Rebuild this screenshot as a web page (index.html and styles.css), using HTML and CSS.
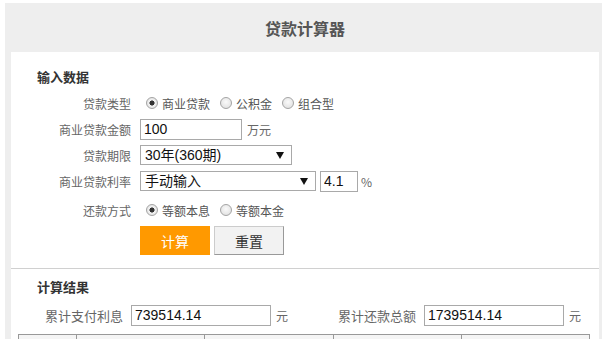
FILE: index.html
```html
<!doctype html>
<html lang="zh-CN">
<head>
    <meta charset="utf-8">
    <meta name="viewport" content="width=device-width, initial-scale=1">
    <title>贷款计算器</title>
    <link rel="stylesheet" href="styles.css">
</head>
<body>

<div class="calc">
    <!-- Заголовок -->
    <div class="calc-header">贷款计算器</div>

    <div class="calc-card">
        <!-- Ввод данных -->
        <div class="calc-section">
            <h2 class="section-title">输入数据</h2>

            <div class="form-row">
                <span class="form-label">贷款类型</span>
                <div class="form-controls">
                    <label class="radio"><input type="radio" class="radio-input" name="type" checked>商业贷款</label>
                    <label class="radio"><input type="radio" class="radio-input" name="type">公积金</label>
                    <label class="radio"><input type="radio" class="radio-input" name="type">组合型</label>
                </div>
            </div>

            <div class="form-row">
                <span class="form-label">商业贷款金额</span>
                <div class="form-controls">
                    <input type="text" class="text-input amount-input" value="100">
                    <span class="unit">万元</span>
                </div>
            </div>

            <div class="form-row">
                <span class="form-label">贷款期限</span>
                <div class="form-controls">
                    <select class="select term-select">
                        <option>30年(360期)</option>
                    </select>
                </div>
            </div>

            <div class="form-row">
                <span class="form-label">商业贷款利率</span>
                <div class="form-controls">
                    <select class="select rate-select">
                        <option>手动输入</option>
                    </select>
                    <input type="text" class="text-input rate-input" value="4.1">
                    <span class="unit unit-tight">%</span>
                </div>
            </div>

            <div class="form-row form-row-tall">
                <span class="form-label">还款方式</span>
                <div class="form-controls">
                    <label class="radio"><input type="radio" class="radio-input" name="mode" checked>等额本息</label>
                    <label class="radio"><input type="radio" class="radio-input" name="mode">等额本金</label>
                </div>
            </div>

            <div class="form-actions">
                <button type="button" class="btn btn-primary">计算</button>
                <button type="button" class="btn btn-default">重置</button>
            </div>
        </div>

        <!-- Результаты -->
        <div class="calc-section calc-result">
            <h2 class="section-title">计算结果</h2>

            <div class="result-row">
                <div class="result-item">
                    <span class="result-label">累计支付利息</span>
                    <input type="text" class="text-input result-input" value="739514.14">
                    <span class="unit">元</span>
                </div>
                <div class="result-item">
                    <span class="result-label result-label-wide">累计还款总额</span>
                    <input type="text" class="text-input result-input" value="1739514.14">
                    <span class="unit">元</span>
                </div>
            </div>

            <!-- Таблица платежей (заголовки ниже видимой области) -->
            <table class="result-table">
                <thead>
                <tr>
                    <th class="col-num"></th>
                    <th></th>
                    <th></th>
                    <th></th>
                    <th></th>
                </tr>
                </thead>
            </table>
        </div>
    </div>
</div>

</body>
</html>
```

FILE: styles.css
```css
/* Сброс */
*, *::before, *::after {
    box-sizing: border-box;
}

:root {
    --calc-bg: #eeeeee;
    --calc-border: #a9a9a9;
    --calc-label: #666;
    --calc-accent: #ff9900;
}

body {
    margin: 0;
    background: #fff;
    font-family: "Liberation Sans", "Noto Sans CJK SC", sans-serif;
    color: #333;
    overflow: hidden;
}

/* Контейнер калькулятора */
.calc {
    margin: 3px 4px 0 5px;
    padding: 0 3px 0 6px;
    background: var(--calc-bg);
    height: 340px;
}

.calc-header {
    height: 49px;
    line-height: 50px;
    text-align: center;
    font-size: 16px;
    font-weight: bold;
    color: #555;
    font-family: "Noto Sans CJK SC", sans-serif;
}

.calc-card {
    background: #fff;
    height: 300px;
}

.calc-section {
    padding: 15px 0 13px;
}

.calc-result {
    border-top: 1px solid #d0d0d0;
    padding-top: 8px;
}

.section-title {
    margin: 0 0 3px 26px;
    height: 20px;
    line-height: 20px;
    font-size: 13px;
    font-weight: bold;
    color: #333;
    font-family: "Noto Sans CJK SC", sans-serif;
}

/* Строки формы */
.form-row {
    display: flex;
    align-items: center;
    height: 26px;
}

.form-row-tall {
    height: 32px;
}

.form-label {
    width: 120px;
    text-align: right;
    font-size: 12px;
    color: var(--calc-label);
    font-family: "Noto Sans CJK SC", sans-serif;
}

.form-controls {
    display: flex;
    align-items: center;
    margin-left: 9px;
}

.radio {
    display: flex;
    align-items: center;
    font-size: 12px;
    color: #555;
    font-family: "Noto Sans CJK SC", sans-serif;
    margin-right: 4px;
    cursor: pointer;
}

.radio-input {
    appearance: none;
    width: 12px;
    height: 12px;
    margin: 0 4px 0 6px;
    border: 1px solid #a4a4a4;
    border-radius: 50%;
    background: radial-gradient(circle at 50% 40%, #fafafa 0, #dcdcdc 100%);
}

.radio-input:checked {
    background: radial-gradient(circle, #333 0 2.3px, #f4f4f4 2.8px, #d8d8d8 100%);
}

.text-input {
    height: 21px;
    padding: 0 3px;
    margin: 0;
    border: 1px solid var(--calc-border);
    font-family: "Liberation Sans", sans-serif;
    font-size: 14px;
    color: #111;
    background: #fff;
}

.amount-input {
    width: 102px;
}

.rate-input {
    width: 38px;
    margin-left: 4px;
}

.select {
    appearance: none;
    height: 20px;
    padding: 0 0 0 4px;
    margin: 0;
    border: 1px solid var(--calc-border);
    border-radius: 0;
    font-family: "Liberation Sans", "Noto Sans CJK SC", sans-serif;
    font-size: 14px;
    color: #111;
    background: #fff url("data:image/svg+xml,%3csvg xmlns='http://www.w3.org/2000/svg' viewBox='0 0 8 7'%3e%3cpath d='M0 0h8L4 7z' fill='%23111'/%3e%3c/svg%3e") no-repeat right 7px center / 8px 7px;
}

.term-select {
    width: 152px;
}

.rate-select {
    width: 176px;
}

.unit {
    margin-left: 5px;
    font-size: 12px;
    color: var(--calc-label);
    font-family: "Noto Sans CJK SC", sans-serif;
}

.unit-tight {
    margin-left: 3px;
}

/* Кнопки */
.form-actions {
    display: flex;
    gap: 4px;
    margin-left: 129px;
}

.btn {
    width: 70px;
    height: 29px;
    font-size: 14px;
    font-family: "Noto Sans CJK SC", sans-serif;
    cursor: pointer;
}

.btn-primary {
    border: none;
    background: var(--calc-accent);
    color: #fff;
}

.btn-default {
    border: 1px solid #ccc;
    border-right-color: #999;
    border-bottom-color: #999;
    background: #f2f2f2;
    color: #333;
}

/* Итоги */
.result-row {
    display: flex;
    align-items: center;
    height: 30px;
    margin-top: 2px;
}

.result-item {
    display: flex;
    align-items: center;
}

.result-label {
    width: 112px;
    margin-right: 8px;
    text-align: right;
    font-size: 13px;
    color: var(--calc-label);
    font-family: "Noto Sans CJK SC", sans-serif;
}

.result-label-wide {
    width: 128px;
}

.result-input {
    width: 140px;
}

.result-table {
    width: 572px;
    margin: 4px 0 0 7px;
    border-collapse: collapse;
}

.result-table th {
    height: 28px;
    width: 128px;
    border: 1px solid #999;
    background: #f5f5f5;
    font-size: 12px;
    font-weight: normal;
}

.result-table .col-num {
    width: 58px;
}
```
